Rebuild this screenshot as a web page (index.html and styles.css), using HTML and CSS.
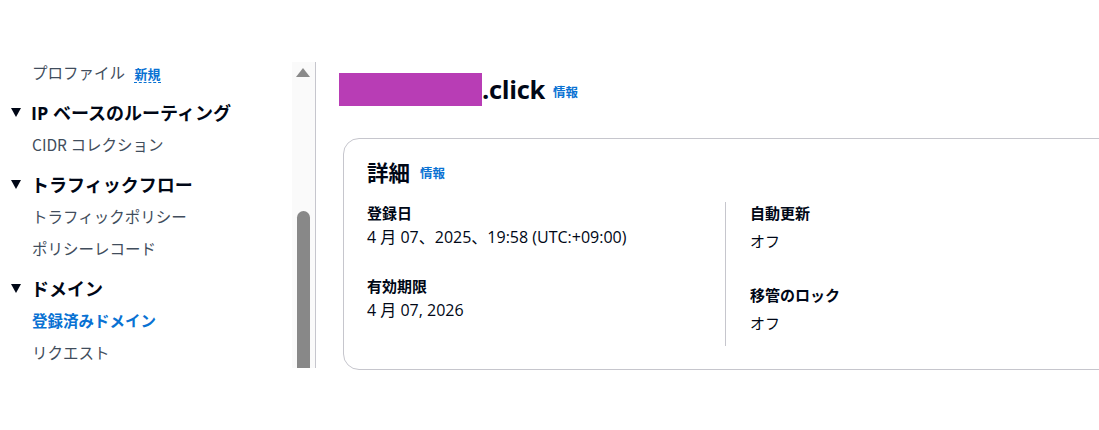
FILE: index.html
```html
<!DOCTYPE html>
<html lang="ja">
<head>
<meta charset="utf-8">
<link rel="stylesheet" href="styles.css">
</head>
<body>
<div class="page">
  <aside class="sidebar">
    <nav class="nav">
      <ul class="nav-list">
        <li class="nav-link">プロファイル <span class="badge-new">新規</span></li>
        <li class="nav-head"><span class="caret"></span>IP ベースのルーティング</li>
        <li class="nav-link">CIDR コレクション</li>
        <li class="nav-head"><span class="caret"></span>トラフィックフロー</li>
        <li class="nav-link">トラフィックポリシー</li>
        <li class="nav-link">ポリシーレコード</li>
        <li class="nav-head"><span class="caret"></span>ドメイン</li>
        <li class="nav-link active">登録済みドメイン</li>
        <li class="nav-link">リクエスト</li>
      </ul>
    </nav>
    <div class="scrollbar">
      <div class="scroll-arrow"></div>
      <div class="scroll-thumb"></div>
    </div>
  </aside>
  <main class="main">
    <h1 class="title"><span class="redact"></span>.click <span class="info">情報</span></h1>
    <section class="card">
      <h2 class="card-title">詳細 <span class="info">情報</span></h2>
      <div class="cols">
        <div class="col col-left">
          <div class="item">
            <div class="key">登録日</div>
            <div class="val">4 月 07、2025、19:58 (UTC:+09:00)</div>
          </div>
          <div class="item">
            <div class="key">有効期限</div>
            <div class="val">4 月 07, 2026</div>
          </div>
        </div>
        <div class="col col-right">
          <div class="item">
            <div class="key">自動更新</div>
            <div class="val">オフ</div>
          </div>
          <div class="item">
            <div class="key">移管のロック</div>
            <div class="val">オフ</div>
          </div>
        </div>
      </div>
    </section>
  </main>
</div>
</body>
</html>
```

FILE: styles.css
```css
* { box-sizing: border-box; }
html, body {
  margin: 0;
  padding: 0;
  background: #ffffff;
  overflow: hidden;
}
body {
  font-family: "Open Sans", "Noto Sans CJK JP", sans-serif;
  color: #000716;
  width: 1099px;
  height: 430px;
}
.page {
  display: flex;
  align-items: flex-start;
  padding-top: 62px;
  overflow: hidden;
  width: 1099px;
}
.sidebar {
  display: flex;
  width: 316px;
  height: 306px;
  border-right: 1px solid #c6c6cd;
  flex-shrink: 0;
}
.nav {
  width: 292px;
  height: 306px;
  overflow: hidden;
}
.nav-list {
  list-style: none;
  margin: -6px 0 0 0;
  padding: 0;
}
.nav-link {
  height: 32px;
  line-height: 32px;
  padding-left: 32px;
  font-size: 15.5px;
  color: #414d5c;
  font-family: "Noto Sans CJK JP", "Open Sans", sans-serif;
  white-space: nowrap;
}
.nav-link.active {
  color: #0972d3;
  font-weight: 700;
}
.badge-new {
  color: #0972d3;
  font-weight: 700;
  font-size: 13px;
  margin-left: 6px;
  border-bottom: 1px dashed #0972d3;
  line-height: 16px;
  display: inline-block;
}
.nav-head {
  display: flex;
  align-items: center;
  height: 32px;
  margin-top: 8px;
  font-size: 18px;
  font-weight: 700;
  color: #000716;
  font-family: "Open Sans", "Noto Sans CJK JP", sans-serif;
  white-space: nowrap;
}
.caret {
  width: 0;
  height: 0;
  border-left: 5.5px solid transparent;
  border-right: 5.5px solid transparent;
  border-top: 9px solid #000716;
  margin-left: 11px;
  margin-right: 10px;
}
.scrollbar {
  width: 23px;
  height: 306px;
  background: #fafafa;
  display: flex;
  flex-direction: column;
  align-items: flex-start;
  padding-left: 5px;
}
.scroll-arrow {
  width: 0;
  height: 0;
  border-left: 7.5px solid transparent;
  border-right: 7.5px solid transparent;
  border-bottom: 9px solid #8a8a8a;
  margin-top: 6px;
  margin-left: -1px;
}
.scroll-thumb {
  width: 13px;
  height: 157px;
  margin-top: 134px;
  background: #888888;
  border-radius: 7px 7px 0 0;
}
.main {
  padding-left: 23px;
  width: 783px;
  flex-shrink: 0;
  overflow: hidden;
  height: 320px;
}
.title {
  display: flex;
  align-items: center;
  margin: 11px 0 0 0;
  font-size: 25.5px;
  font-weight: 700;
  height: 32px;
  white-space: nowrap;
  letter-spacing: -0.3px;
}
.redact {
  display: inline-block;
  width: 143px;
  height: 33px;
  background: #b83db5;
}
.info {
  font-size: 12.5px;
  font-weight: 700;
  color: #0972d3;
  margin-left: 9px;
  letter-spacing: 0;
  font-family: "Noto Sans CJK JP", sans-serif;
}
.title .info { margin-left: 8px; margin-top: 5px; }
.card {
  margin: 33px 0 0 4px;
  width: 820px;
  height: 232px;
  border: 1px solid #c6c6cd;
  border-radius: 16px;
  padding: 17px 0 0 23px;
}
.card-title {
  display: flex;
  align-items: center;
  margin: 0;
  height: 30px;
  font-size: 21.5px;
  font-weight: 700;
  font-family: "Noto Sans CJK JP", sans-serif;
}
.card-title .info { margin-left: 10px; margin-top: 2px; }
.cols {
  display: flex;
  margin-top: 16px;
}
.col {
  display: flex;
  flex-direction: column;
}
.col-left {
  width: 358px;
  gap: 29px;
  padding-top: 1px;
}
.col-right {
  border-left: 1px solid #c6c6cd;
  padding: 1px 0 13px 24px;
  gap: 34px;
}
.key {
  font-size: 15px;
  font-weight: 700;
  line-height: 20px;
  height: 20px;
  font-family: "Noto Sans CJK JP", sans-serif;
}
.val {
  font-size: 16px;
  line-height: 20px;
  height: 20px;
  margin-top: 4px;
  white-space: nowrap;
}
.col-right .val {
  margin-top: 8px;
  font-size: 15px;
  font-family: "Noto Sans CJK JP", sans-serif;
}
```
